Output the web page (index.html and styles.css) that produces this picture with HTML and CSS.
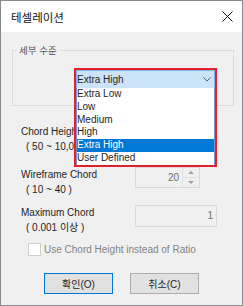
FILE: index.html
```html
<!DOCTYPE html>
<html lang="ko">
<head>
    <meta charset="UTF-8">
    <meta name="viewport" content="width=device-width, initial-scale=1.0">
    <title>테셀레이션</title>
    <link rel="stylesheet" href="styles.css">
</head>
<body>
    <div class="window">
        <div class="titlebar">
            <span class="title">테셀레이션</span>
            <svg class="close" width="11" height="11" viewBox="0 0 11 11">
                <path d="M0.5 0.5 L10.5 10.5 M10.5 0.5 L0.5 10.5" stroke="#111" stroke-width="1" fill="none"/>
            </svg>
        </div>
        <div class="dialog-body">
            <fieldset class="group">
                <legend>세부 수준</legend>
                <div class="combo">
                    <div class="combo-field">
                        <span>Extra High</span>
                        <svg class="chevron" width="8" height="5" viewBox="0 0 8 5">
                            <polyline points="0.5,0.5 4,4 7.5,0.5" stroke="#606060" stroke-width="1" fill="none"/>
                        </svg>
                    </div>
                    <ul class="combo-list">
                        <li>Extra Low</li>
                        <li>Low</li>
                        <li>Medium</li>
                        <li>High</li>
                        <li class="selected">Extra High</li>
                        <li>User Defined</li>
                    </ul>
                </div>
            </fieldset>

            <!-- first row sits under the open drop-down, only its left part shows -->
            <div class="field-row row-first">
                <div class="field-label clipped">
                    <div>Chord Heigh</div>
                    <div class="range">( 50 ~ 10,0</div>
                </div>
                <div class="text-input"></div>
            </div>

            <div class="field-row row-second">
                <div class="field-label">
                    <div>Wireframe Chord</div>
                    <div class="range">( 10 ~ 40 )</div>
                </div>
                <div class="spin">
                    <div class="spin-value">20</div>
                    <div class="spin-buttons">
                        <div class="spin-btn"><span class="arrow-up"></span></div>
                        <div class="spin-btn"><span class="arrow-down"></span></div>
                    </div>
                </div>
            </div>

            <div class="field-row row-third">
                <div class="field-label">
                    <div>Maximum Chord</div>
                    <div class="range">( 0.001 이상 )</div>
                </div>
                <div class="text-input">1</div>
            </div>

            <label class="check-row">
                <span class="check-box"></span>
                <span>Use Chord Height instead of Ratio</span>
            </label>

            <div class="buttons">
                <button class="btn btn-default">확인(O)</button>
                <button class="btn">취소(C)</button>
            </div>
        </div>
    </div>
</body>
</html>
```

FILE: styles.css
```css
body {
    margin: 0;
    padding: 0;
    font-family: "Liberation Sans", "Noto Sans CJK KR", sans-serif;
    font-size: 10px;
    color: #1e1e1e;
}

.window {
    width: 243px;
    height: 306px;
    box-sizing: border-box;
    border: 1px solid #8a8a8a;
    background-color: #f0f0f0;
    display: flex;
    flex-direction: column;
}

.titlebar {
    height: 31px;
    background-color: #fff;
    display: flex;
    align-items: center;
    justify-content: space-between;
    padding: 0 9px 0 10px;
}

.title {
    font-family: "Noto Sans CJK KR", sans-serif;
    font-size: 11.5px;
    color: #111;
}

.close {
    display: block;
}

.dialog-body {
    flex: 1;
    padding: 12px 11px 0 11px;
}

.group {
    width: 222px;
    box-sizing: border-box;
    margin: 0;
    padding: 0;
    border: 1px solid #dcdcdc;
}

.group legend {
    margin-left: 4px;
    padding: 0 2px;
    font-family: "Noto Sans CJK KR", sans-serif;
    font-size: 9.5px;
    line-height: 12px;
    color: #555;
}

.combo {
    position: relative;
    z-index: 2;
    width: 143px;
    box-sizing: border-box;
    margin: 12px 0 17px 61px;
    border: 2px solid #e3202d;
    border-bottom: none;
}

.combo-field {
    height: 18px;
    box-sizing: border-box;
    border: 1px solid #7eb4ea;
    border-bottom: none;
    background-color: #cce4f7;
    display: flex;
    align-items: center;
    justify-content: space-between;
    padding: 0 3px 0 0;
    line-height: 16px;
}

.chevron {
    display: block;
}

.combo-list {
    position: absolute;
    top: 100%;
    left: -2px;
    right: -2px;
    margin: 0;
    padding: 0 1px 0 1px;
    list-style: none;
    background-color: #fff;
    border: 2px solid #e3202d;
    border-top: none;
    box-shadow: inset 1px 0 0 #7a96c2, inset -1px 0 0 #7a96c2;
}

.combo-list li {
    height: 12.8px;
    line-height: 12.8px;
    white-space: nowrap;
}

.combo-list li.selected {
    background-color: #0078d7;
    color: #fff;
}

.field-row {
    display: grid;
    grid-template-columns: 114px 82px;
    margin-left: 9px;
    align-items: start;
}

.row-first {
    margin-top: 18px;
}

.row-second {
    margin-top: 13px;
}

.row-third {
    margin-top: 8px;
}

.field-label {
    line-height: 15px;
    white-space: nowrap;
}

.field-label.clipped {
    width: 53px;
    overflow: hidden;
}

.range {
    padding-left: 5px;
}

.text-input {
    height: 22px;
    box-sizing: border-box;
    border: 1px solid #d9d9d9;
    background-color: #f0f0f0;
    color: #6d6d6d;
    text-align: right;
    padding-right: 3px;
    line-height: 20px;
}

.spin {
    width: 65px;
    height: 21px;
    box-sizing: border-box;
    border: 1px solid #d9d9d9;
    background-color: #f0f0f0;
    display: flex;
}

.spin-value {
    flex: 1;
    text-align: right;
    padding-right: 3px;
    line-height: 19px;
    color: #6d6d6d;
}

.spin-buttons {
    width: 16px;
    border-left: 1px solid #e2e2e2;
    display: flex;
    flex-direction: column;
}

.spin-btn {
    flex: 1;
    display: flex;
    align-items: center;
    justify-content: center;
}

.spin-btn + .spin-btn {
    border-top: 1px solid #e2e2e2;
}

.arrow-up {
    width: 0;
    height: 0;
    border-left: 3px solid transparent;
    border-right: 3px solid transparent;
    border-bottom: 3px solid #a0a0a0;
}

.arrow-down {
    width: 0;
    height: 0;
    border-left: 3px solid transparent;
    border-right: 3px solid transparent;
    border-top: 3px solid #a0a0a0;
}

.check-row {
    display: flex;
    align-items: center;
    gap: 3px;
    margin: 8px 0 0 16px;
    color: #838383;
    line-height: 13px;
}

.check-box {
    width: 13px;
    height: 13px;
    box-sizing: border-box;
    border: 1px solid #cfcfcf;
    background-color: #fff;
}

.buttons {
    display: flex;
    justify-content: center;
    gap: 17px;
    margin-top: 17px;
}

.btn {
    width: 69px;
    height: 21px;
    box-sizing: border-box;
    border: 1px solid #adadad;
    background-color: #e1e1e1;
    font-family: "Liberation Sans", "Noto Sans CJK KR", sans-serif;
    font-size: 10px;
    color: #1e1e1e;
    padding: 0;
}

.btn-default {
    border-color: #0078d7;
}
```
